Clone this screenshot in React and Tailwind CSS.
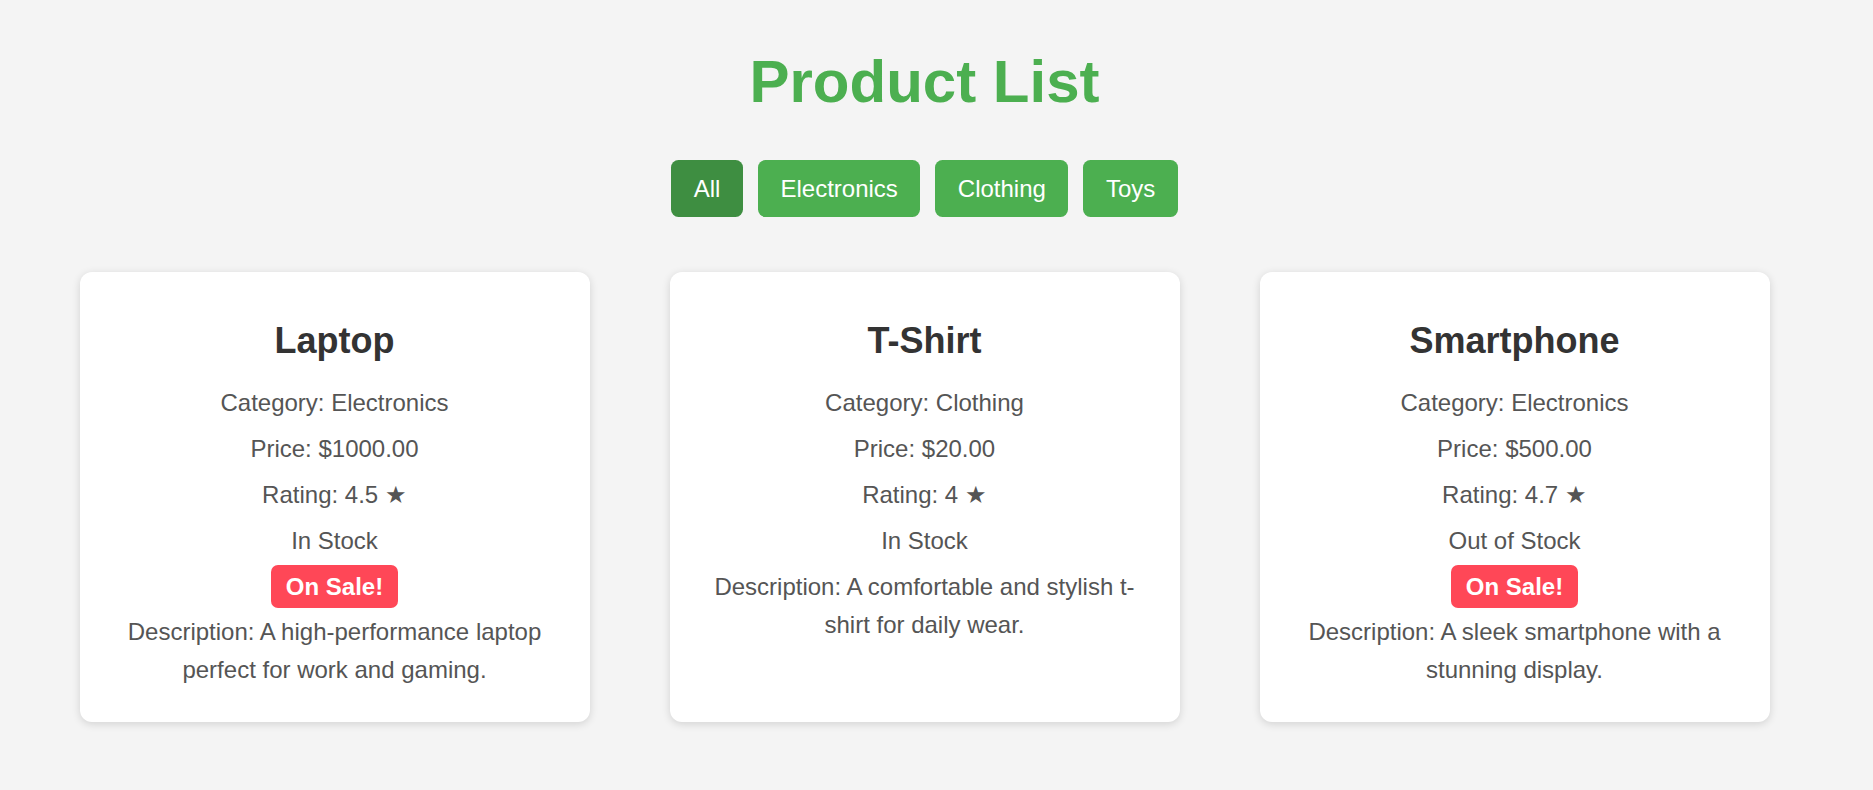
import { useState } from 'react'

const products = [
  {
    id: 1,
    name: 'Laptop',
    category: 'Electronics',
    price: 1000,
    rating: 4.5,
    inStock: true,
    onSale: true,
    description: 'A high-performance laptop perfect for work and gaming.'
  },
  {
    id: 2,
    name: 'T-Shirt',
    category: 'Clothing',
    price: 20,
    rating: 4,
    inStock: true,
    onSale: false,
    description: 'A comfortable and stylish t-shirt for daily wear.'
  },
  {
    id: 3,
    name: 'Smartphone',
    category: 'Electronics',
    price: 500,
    rating: 4.7,
    inStock: false,
    onSale: true,
    description: 'A sleek smartphone with a stunning display.'
  }
]

const categories = ['All', 'Electronics', 'Clothing', 'Toys']

function ProductCard({ product }) {
  return (
    <div className="w-[510px] bg-white rounded-[12px] shadow-[0_2px_8px_rgba(0,0,0,0.14)] px-[30px] pt-[48px] pb-[32px] text-center">
      <h2 className="text-[36px] leading-[41px] font-bold text-[#333]">{product.name}</h2>
      <div className="mt-[23px] flex flex-col items-center text-[24px] leading-[38.4px] text-[#555]">
        <p>Category: {product.category}</p>
        <p className="mt-[7.5px]">Price: ${product.price.toFixed(2)}</p>
        <p className="mt-[7.5px]">Rating: {product.rating} ★</p>
        <p className="mt-[7.5px]">{product.inStock ? 'In Stock' : 'Out of Stock'}</p>
        {product.onSale && (
          <span className="mt-[5px] inline-block bg-[#ff4757] text-white font-bold leading-[27.6px] px-[15px] py-[7.5px] rounded-[7px]">
            On Sale!
          </span>
        )}
        <p className={product.onSale ? 'mt-[5px]' : 'mt-[7.5px]'}>Description: {product.description}</p>
      </div>
    </div>
  )
}

export default function App() {
  const [active, setActive] = useState('All')

  const visible = products.filter(p => active === 'All' || p.category === active)

  return (
    <div className="min-h-screen bg-[#f4f4f4] pr-[24px] font-['Liberation_Sans',Arial,sans-serif]">
      <div className="pt-[47px] pb-[40px]">
        <h1 className="text-center text-[60px] leading-[69px] font-bold text-[#4caf50]">Product List</h1>

        <div className="mt-[43.5px] flex justify-center gap-[15px]">
          {categories.map(cat => (
            <button
              key={cat}
              onClick={() => setActive(cat)}
              className={`text-white text-[24px] leading-[27.6px] px-[22.5px] py-[15px] rounded-[7.5px] ${active === cat ? 'bg-[#3e8e41]' : 'bg-[#4caf50]'}`}
            >
              {cat}
            </button>
          ))}
        </div>

        <div className="mt-[55px] flex justify-center items-stretch gap-[80px]">
          {visible.map(p => (
            <ProductCard key={p.id} product={p} />
          ))}
        </div>
      </div>
    </div>
  )
}
